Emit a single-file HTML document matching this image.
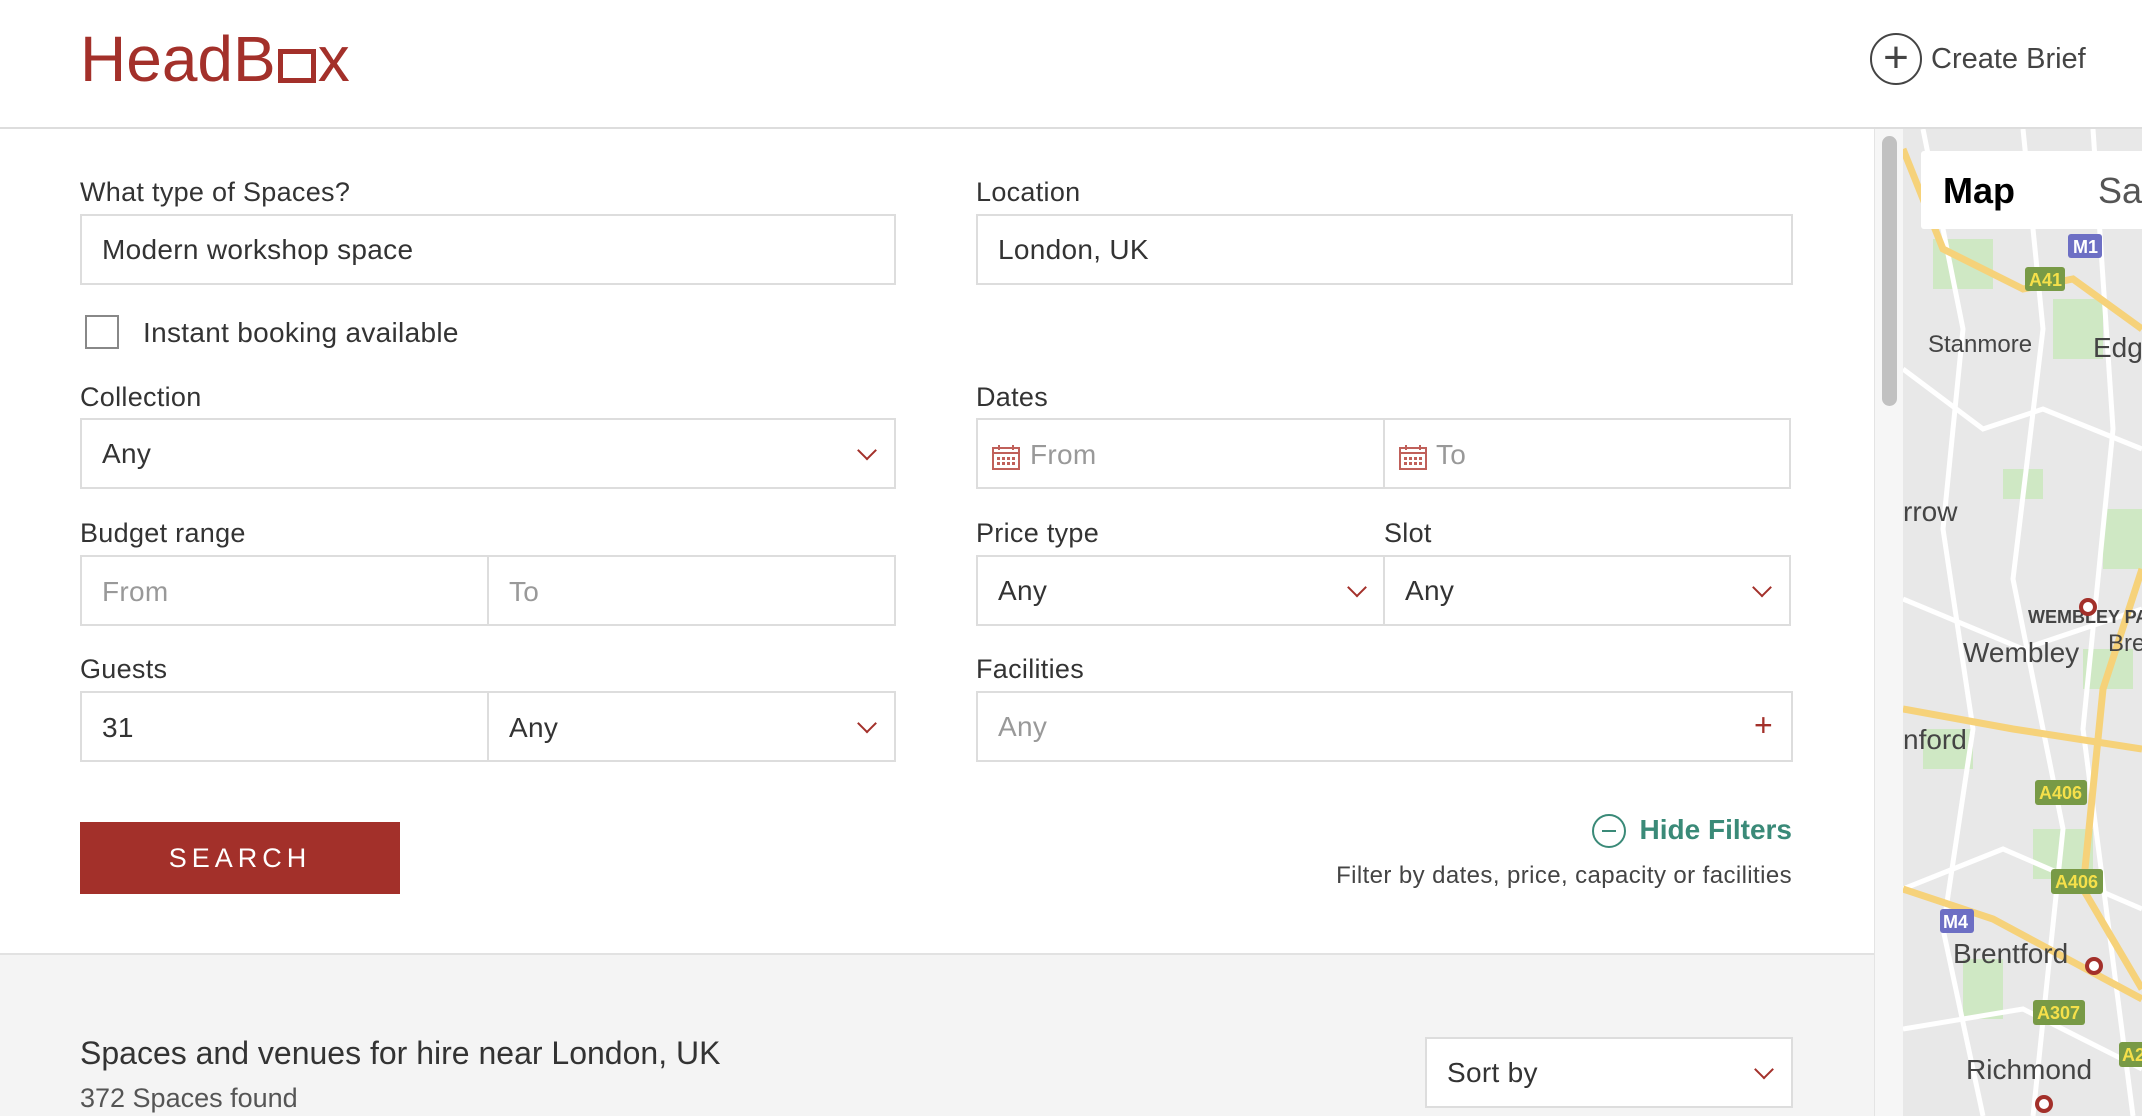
<!DOCTYPE html>
<html><head><meta charset="utf-8"><style>
*{box-sizing:border-box;margin:0;padding:0}
body{width:2142px;height:1116px;overflow:hidden;background:#fff;font-family:"Liberation Sans",sans-serif;color:#333;position:relative}
.abs{position:absolute}
.lbl{position:absolute;font-size:27px;color:#333;letter-spacing:0.3px}
.box{position:absolute;border:2px solid #ddd;background:#fff;font-size:28px;display:flex;align-items:center;padding-left:20px;color:#333;letter-spacing:0.3px}
.ph{color:#999}
.chev{position:absolute;right:20px;top:50%;width:14px;height:14px;border-right:2px solid #a3302a;border-bottom:2px solid #a3302a;transform:translateY(-75%) rotate(45deg)}
.split{position:absolute;top:0;bottom:0;width:2px;background:#ddd}
</style></head><body>
<div class="abs" style="left:80px;top:22px;font-size:64px;color:#a3302a;letter-spacing:0px">HeadB<span style="display:inline-block;width:38px;height:34px;border:5px solid #a3302a;vertical-align:-2px;margin:0 2px"></span>x</div>
<div class="abs" style="left:1870px;top:33px;width:52px;height:52px;border:2px solid #444;border-radius:50%;font-size:44px;line-height:46px;text-align:center;color:#444">+</div>
<div class="abs" style="left:1931px;top:43px;font-size:29px;color:#444">Create Brief</div>
<div class="abs" style="left:0;top:127px;width:2142px;height:2px;background:#ddd"></div>

<div class="lbl" style="left:80px;top:177px">What type of Spaces?</div>
<div class="box" style="left:80px;top:214px;width:816px;height:71px">Modern workshop space</div>
<div class="lbl" style="left:976px;top:177px">Location</div>
<div class="box" style="left:976px;top:214px;width:817px;height:71px">London, UK</div>
<div class="abs" style="left:85px;top:315px;width:34px;height:34px;border:2px solid #888"></div>
<div class="lbl" style="left:143px;top:317px;font-size:28px">Instant booking available</div>

<div class="lbl" style="left:80px;top:382px">Collection</div>
<div class="box" style="left:80px;top:418px;width:816px;height:71px">Any<span class="chev"></span></div>
<div class="lbl" style="left:976px;top:382px">Dates</div>
<div class="box" style="left:976px;top:418px;width:815px;height:71px;padding:0">
<span class="split" style="left:405px"></span>
<svg class="abs" style="left:14px;top:24px" width="28" height="26" viewBox="0 0 28 26"><rect x="1" y="4" width="26" height="21" fill="none" stroke="#c0605a" stroke-width="2"/><line x1="1" y1="9" x2="27" y2="9" stroke="#c0605a" stroke-width="2"/><line x1="7" y1="1" x2="7" y2="6" stroke="#c0605a" stroke-width="2"/><line x1="21" y1="1" x2="21" y2="6" stroke="#c0605a" stroke-width="2"/><g fill="#c0605a"><rect x="5" y="13" width="3" height="3"/><rect x="10" y="13" width="3" height="3"/><rect x="15" y="13" width="3" height="3"/><rect x="20" y="13" width="3" height="3"/><rect x="5" y="18" width="3" height="3"/><rect x="10" y="18" width="3" height="3"/><rect x="15" y="18" width="3" height="3"/><rect x="20" y="18" width="3" height="3"/></g></svg>
<span class="abs ph" style="left:52px;top:19px">From</span>
<svg class="abs" style="left:421px;top:24px" width="28" height="26" viewBox="0 0 28 26"><rect x="1" y="4" width="26" height="21" fill="none" stroke="#c0605a" stroke-width="2"/><line x1="1" y1="9" x2="27" y2="9" stroke="#c0605a" stroke-width="2"/><line x1="7" y1="1" x2="7" y2="6" stroke="#c0605a" stroke-width="2"/><line x1="21" y1="1" x2="21" y2="6" stroke="#c0605a" stroke-width="2"/><g fill="#c0605a"><rect x="5" y="13" width="3" height="3"/><rect x="10" y="13" width="3" height="3"/><rect x="15" y="13" width="3" height="3"/><rect x="20" y="13" width="3" height="3"/><rect x="5" y="18" width="3" height="3"/><rect x="10" y="18" width="3" height="3"/><rect x="15" y="18" width="3" height="3"/><rect x="20" y="18" width="3" height="3"/></g></svg>
<span class="abs ph" style="left:458px;top:19px">To</span>
</div>

<div class="lbl" style="left:80px;top:518px">Budget range</div>
<div class="box" style="left:80px;top:555px;width:816px;height:71px;padding:0"><span class="split" style="left:405px"></span><span class="abs ph" style="left:20px;top:19px">From</span><span class="abs ph" style="left:427px;top:19px">To</span></div>
<div class="lbl" style="left:976px;top:518px">Price type</div>
<div class="lbl" style="left:1384px;top:518px">Slot</div>
<div class="box" style="left:976px;top:555px;width:410px;height:71px">Any<span class="chev"></span></div>
<div class="box" style="left:1383px;top:555px;width:408px;height:71px">Any<span class="chev"></span></div>

<div class="lbl" style="left:80px;top:654px">Guests</div>
<div class="box" style="left:80px;top:691px;width:816px;height:71px;padding:0"><span class="split" style="left:405px"></span><span class="abs" style="left:20px;top:19px">31</span><span class="abs" style="left:427px;top:19px">Any</span><span class="chev"></span></div>
<div class="lbl" style="left:976px;top:654px">Facilities</div>
<div class="box" style="left:976px;top:691px;width:817px;height:71px"><span class="ph">Any</span><span class="abs" style="right:18px;top:14px;color:#a3302a;font-size:32px">+</span></div>

<div class="abs" style="left:80px;top:822px;width:320px;height:72px;background:#a3302a;color:#fff;font-size:27px;letter-spacing:5px;text-align:center;line-height:72px">SEARCH</div>
<div class="abs" style="left:1592px;top:814px;width:34px;height:34px;border:2px solid #3a8a78;border-radius:50%"><div class="abs" style="left:8px;top:14px;width:14px;height:2px;background:#3a8a78"></div></div>
<div class="abs" style="right:350px;top:814px;font-size:28px;font-weight:bold;color:#3a8a78">Hide Filters</div>
<div class="abs" style="right:350px;top:862px;font-size:24px;color:#444;letter-spacing:0.4px">Filter by dates, price, capacity or facilities</div>

<div class="abs" style="left:0;top:953px;width:1874px;height:163px;background:#f4f4f4;border-top:2px solid #e2e2e2"></div>
<div class="abs" style="left:80px;top:1035px;font-size:32px;color:#333">Spaces and venues for hire near London, UK</div>
<div class="abs" style="left:80px;top:1083px;font-size:27px;color:#555">372 Spaces found</div>
<div class="box" style="left:1425px;top:1037px;width:368px;height:71px">Sort by<span class="chev"></span></div>

<div class="abs" style="left:1874px;top:129px;width:29px;height:987px;background:#f6f6f6;border-left:1px solid #e4e4e4"></div>
<div class="abs" style="left:1882px;top:136px;width:15px;height:270px;background:#c1c1c1;border-radius:8px"></div>
<svg class="abs" style="left:1903px;top:129px" width="239" height="987" viewBox="0 0 239 987">
<rect width="239" height="987" fill="#e8e8e8"/>
<g fill="#cfe8c4"><rect x="30" y="110" width="60" height="50"/><rect x="150" y="170" width="50" height="60"/><rect x="100" y="340" width="40" height="30"/><rect x="200" y="380" width="39" height="60"/><rect x="20" y="600" width="50" height="40"/><rect x="130" y="700" width="60" height="50"/><rect x="60" y="830" width="40" height="60"/><rect x="180" y="520" width="50" height="40"/></g>
<g stroke="#fff" stroke-width="5" fill="none"><path d="M0 240 L80 300 L140 280 L239 320"/><path d="M20 0 L60 200 L40 400 L70 600 L40 800 L80 987"/><path d="M120 0 L140 200 L110 450 L160 700 L130 987"/><path d="M0 470 L120 520 L239 480"/><path d="M0 760 L100 720 L239 780"/><path d="M0 900 L120 880 L239 940"/><path d="M190 0 L210 300 L180 600 L230 987"/></g>
<g stroke="#f6d27a" stroke-width="7" fill="none"><path d="M0 20 L40 120 L120 160 L170 150 L239 200"/><path d="M239 440 L200 560 L180 760 L239 860"/><path d="M0 580 L110 600 L239 620"/><path d="M0 760 L90 790 L239 870"/></g>
<rect x="18" y="22" width="140" height="78" rx="3" fill="#fff"/><rect x="122" y="22" width="117" height="78" fill="#fff"/>
<text x="40" y="74" font-size="36" font-weight="bold" fill="#000" font-family="Liberation Sans">Map</text>
<text x="195" y="74" font-size="36" fill="#555" font-family="Liberation Sans">Sat</text>
<rect x="165" y="105" width="34" height="24" rx="3" fill="#6d6fc4"/><text x="170" y="124" font-size="18" font-weight="bold" fill="#fff">M1</text>
<rect x="122" y="138" width="40" height="24" rx="3" fill="#789a46"/><text x="126" y="157" font-size="18" font-weight="bold" fill="#f5e04a">A41</text>
<g font-family="Liberation Sans" fill="#444"><text x="25" y="223" font-size="24">Stanmore</text><text x="190" y="228" font-size="28">Edg</text><text x="0" y="392" font-size="28">rrow</text><text x="125" y="494" font-size="18" font-weight="bold">WEMBLEY PA</text><text x="205" y="522" font-size="24">Bre</text><text x="60" y="533" font-size="28">Wembley</text><text x="0" y="620" font-size="28">nford</text><text x="50" y="834" font-size="28">Brentford</text><text x="63" y="950" font-size="28">Richmond</text></g>
<g fill="#789a46"><rect x="132" y="651" width="52" height="25" rx="3"/><rect x="148" y="740" width="52" height="25" rx="3"/><rect x="130" y="871" width="52" height="25" rx="3"/><rect x="216" y="913" width="30" height="25" rx="3"/></g>
<g font-family="Liberation Sans" font-size="18" font-weight="bold" fill="#f5e04a"><text x="136" y="670">A406</text><text x="152" y="759">A406</text><text x="134" y="890">A307</text><text x="219" y="932">A2</text></g>
<rect x="37" y="780" width="34" height="24" rx="3" fill="#6d6fc4"/><text x="40" y="799" font-size="18" font-weight="bold" fill="#fff">M4</text>
<g stroke="#a3302a" stroke-width="4" fill="#fff"><circle cx="185" cy="478" r="7"/><circle cx="191" cy="837" r="7"/><circle cx="141" cy="975" r="7"/></g>
</svg>
</body></html>
